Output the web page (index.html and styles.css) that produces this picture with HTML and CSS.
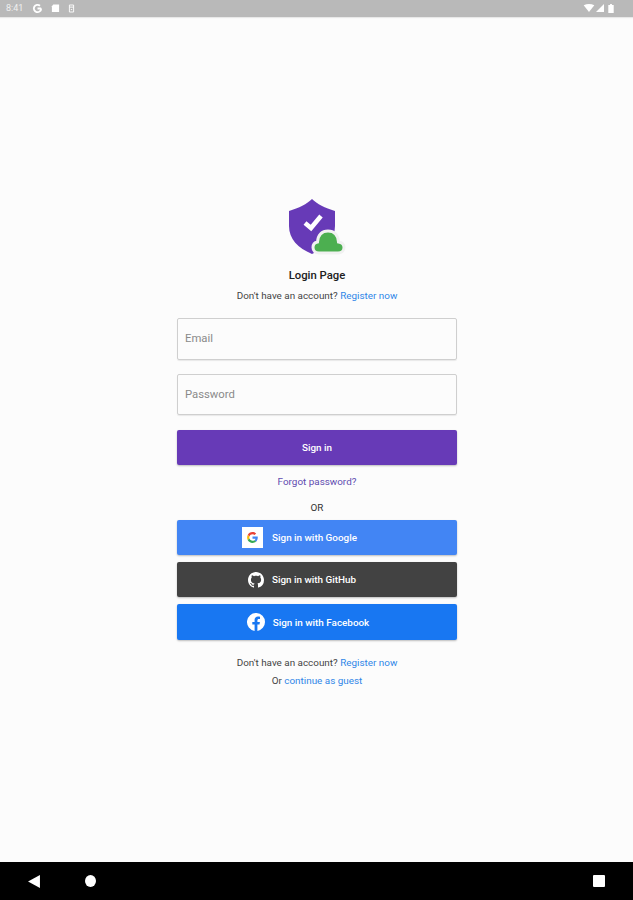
FILE: index.html
```html
<!DOCTYPE html>
<html lang="en">
<head>
    <meta charset="UTF-8">
    <meta name="viewport" content="width=device-width, initial-scale=1.0">
    <title>Login Page</title>
    <link rel="stylesheet" href="styles.css">
</head>
<body>
    <div class="status-bar">
        <div class="status-left">
            <span class="time">8:41</span>
            <svg class="status-icon" viewBox="0 0 24 24" width="11" height="11"><path fill="none" stroke="#fff" stroke-width="4" d="M20 12h-8M20 12a8 8 0 1 1-2.600-5.900"/></svg>
            <svg class="status-icon" viewBox="0 0 10 10" width="9" height="10"><path fill="#fff" d="M2.500 1H9v8.500H1V3z"/></svg>
            <svg class="status-icon" viewBox="0 0 10 12" width="7" height="11"><path fill="none" stroke="#fff" stroke-width="1.300" d="M2 1h6v10H2zM2 4h6M4 7.500h2"/></svg>
        </div>
        <div class="status-right">
            <svg viewBox="0 0 12 9" width="12" height="8"><path fill="#fff" d="M0 1.500Q6-1.500 12 1.500L6 9z"/></svg>
            <svg viewBox="0 0 9 9" width="8" height="8"><path fill="#fff" d="M9 0v9H0z"/></svg>
            <svg class="status-battery" viewBox="0 0 6 10" width="6" height="9"><path fill="#fff" d="M1 1h1V0h2v1h2v9H0V1z"/></svg>
        </div>
    </div>

    <main class="page">
        <div class="login">
            <svg class="logo" viewBox="0 0 59 60" width="59" height="60">
                <path fill="#673ab7" d="M24 1c5 5 13 9 23 12v15c0 13-9 22-23 28C10 50 1 41 1 28V13c10-3 18-7 23-12z"/>
                <path fill="none" stroke="#fff" stroke-width="4.500" d="M17 25l6 5 10-12"/>
                <path fill="#4caf50" stroke="#f1f1f1" stroke-width="3" d="M31 55c-3.500 0-6-2-6-5.500 0-3 2-5 4.500-5.500C30 37 34 33 40 33s10 4 10.500 11c3.500.5 5.500 2.500 5.500 5.500s-2.500 5.500-6 5.500z"/>
            </svg>
            <h1 class="title">Login Page</h1>
            <p class="note note-top">Don't have an account? <a href="#" class="link">Register now</a></p>

            <div class="field">Email</div>
            <div class="field field-password">Password</div>

            <a href="#" class="button button-signin">Sign in</a>
            <a href="#" class="forgot">Forgot password?</a>
            <div class="or">OR</div>

            <div class="socials">
                <a href="#" class="button google">
                    <span class="google-box">
                        <svg viewBox="0 0 48 48" width="11" height="11">
                            <path fill="#ea4335" d="M24 10c3.500 0 6.600 1.200 9.100 3.600l6.800-6.800C35.800 3 30.300.5 24 .5 14.800.5 6.900 5.800 3 13.500l7.900 6.100C12.800 14 17.900 10 24 10z"/>
                            <path fill="#4285f4" d="M47 24.500c0-1.600-.1-3.100-.4-4.500H24v9h13c-.6 3-2.200 5.500-4.800 7.200l7.700 6c4.500-4.200 7.100-10.300 7.100-17.700z"/>
                            <path fill="#fbbc05" d="M10.900 28.600c-.5-1.400-.8-3-.8-4.600s.3-3.200.8-4.600L3 13.300C1.400 16.500.5 20.100.5 24s.9 7.500 2.500 10.700z"/>
                            <path fill="#34a853" d="M24 47.500c6.300 0 11.700-2.100 15.900-5.300l-7.700-6c-2.100 1.400-4.900 2.300-8.200 2.300-6.100 0-11.200-4-13.100-9.600L3 34.700C6.900 42.200 14.800 47.500 24 47.500z"/>
                        </svg>
                    </span>
                    Sign in with Google
                </a>
                <a href="#" class="button github">
                    <svg class="social-icon" viewBox="0 0 16 16" width="16" height="16"><path fill="#fff" d="M8 0C3.580 0 0 3.580 0 8c0 3.540 2.290 6.530 5.470 7.590.4.070.55-.17.55-.38 0-.19-.01-.82-.01-1.490-2.010.37-2.530-.49-2.690-.94-.09-.23-.48-.94-.82-1.130-.28-.15-.68-.52-.01-.53.63-.01 1.080.58 1.230.82.720 1.210 1.870.87 2.330.66.070-.52.280-.87.510-1.070-1.780-.2-3.640-.89-3.640-3.950 0-.87.310-1.590.820-2.150-.08-.2-.36-1.020.08-2.120 0 0 .67-.21 2.200.82.640-.18 1.320-.27 2-.27s1.360.09 2 .27c1.530-1.040 2.200-.82 2.200-.82.440 1.100.160 1.920.080 2.120.510.560.820 1.270.820 2.150 0 3.070-1.870 3.750-3.650 3.950.290.250.540.730.540 1.480 0 1.070-.01 1.930-.01 2.200 0 .210.150.460.550.380A8.010 8.010 0 0 0 16 8c0-4.420-3.580-8-8-8z"/></svg>
                    Sign in with GitHub
                </a>
                <a href="#" class="button facebook">
                    <svg class="social-icon" viewBox="0 0 16 16" width="18" height="18"><path fill="#fff" d="M16 8a8 8 0 1 0-9.250 7.900v-5.590H4.720V8h2.030V6.240c0-2 1.190-3.110 3.020-3.110.870 0 1.790.160 1.790.160v1.970h-1.010c-.990 0-1.300.620-1.300 1.250V8h2.220l-.350 2.310H9.250v5.590A8 8 0 0 0 16 8z"/></svg>
                    Sign in with Facebook
                </a>
            </div>

            <p class="note note-bottom">Don't have an account? <a href="#" class="link">Register now</a></p>
            <p class="note note-guest">Or <a href="#" class="link">continue as guest</a></p>
        </div>
    </main>

    <div class="nav-bar">
        <svg class="nav-back" viewBox="0 0 11 12" width="12" height="13"><path fill="#fff" d="M11 0v12L0 6z"/></svg>
        <span class="nav-home"></span>
        <span class="nav-recent"></span>
    </div>
</body>
</html>
```

FILE: styles.css
```css
* {
    box-sizing: border-box;
}
body {
    font-family: Roboto, 'Liberation Sans', sans-serif;
    background: #fcfcfc;
    margin: 0;
    height: 900px;
    display: flex;
    flex-direction: column;
    overflow: hidden;
}
a {
    text-decoration: none;
}
.status-bar {
    height: 17px;
    background: #b9b9b9;
    color: #f0f0f0;
    display: flex;
    align-items: center;
    justify-content: space-between;
    padding: 0 19px 1px 6px;
    box-shadow: 0 1px 1px rgba(0,0,0,0.08);
}
.status-left {
    display: flex;
    align-items: center;
    gap: 8px;
}
.time {
    font-size: 9px;
    margin-right: 1px;
}
.status-right {
    display: flex;
    align-items: center;
    gap: 1px;
}
.status-battery {
    margin-left: 3px;
}
.page {
    flex: 1;
    padding: 181px 0 0 1px;
}
.login {
    width: 280px;
    margin: 0 auto;
    display: flex;
    flex-direction: column;
    align-items: center;
}
.logo {
    display: block;
}
.title {
    font-size: 11.300px;
    font-weight: 500;
    color: #202020;
    margin: 11px 0 0;
    line-height: 14px;
}
.note {
    font-size: 9.900px;
    line-height: 12px;
    color: #444;
    margin: 0;
}
.note-top {
    margin-top: 7px;
}
.note-bottom {
    margin-top: 17px;
}
.note-guest {
    margin-top: 6px;
}
.link {
    color: #2f86e8;
}
.field {
    width: 100%;
    height: 42px;
    margin-top: 16px;
    padding: 0 7px 1px;
    border: 1px solid #cfcfcf;
    border-radius: 2px;
    box-shadow: 0 1px 1px rgba(0,0,0,0.08);
    display: flex;
    align-items: center;
    font-size: 11.300px;
    color: #8a8a8a;
}
.field-password {
    height: 41px;
    margin-top: 14px;
}
.button {
    width: 100%;
    display: flex;
    align-items: center;
    justify-content: center;
    color: #fff;
    font-size: 9.900px;
    font-weight: 500;
    border-radius: 2px;
    box-shadow: 0 1px 2px rgba(0,0,0,0.25);
}
.button-signin {
    height: 35px;
    margin-top: 15px;
    background: #673ab7;
}
.forgot {
    font-size: 9.900px;
    line-height: 12px;
    color: #5e4bb0;
    margin-top: 11px;
}
.or {
    font-size: 9.900px;
    line-height: 12px;
    color: #333;
    margin-top: 14px;
}
.socials {
    width: 100%;
    margin-top: 6px;
    display: flex;
    flex-direction: column;
    gap: 7px;
}
.socials .button {
    height: 35px;
}
.socials .google {
    background: #4285f4;
    padding-right: 35px;
}
.google-box {
    width: 21px;
    height: 21px;
    background: #fff;
    display: flex;
    align-items: center;
    justify-content: center;
    margin-right: 9px;
}
.socials .github {
    background: #424242;
    padding-right: 30px;
}
.socials .facebook {
    height: 36px;
    background: #1877f2;
    padding-right: 18px;
}
.social-icon {
    margin-right: 8px;
}
.nav-bar {
    height: 38px;
    background: #000;
    display: flex;
    align-items: center;
    padding: 0 28px 0 28px;
}
.nav-home {
    width: 11px;
    height: 12px;
    background: #fff;
    border-radius: 50%;
    margin-left: 45px;
}
.nav-recent {
    width: 12px;
    height: 12px;
    background: #fff;
    border-radius: 1px;
    margin-left: auto;
}
```
